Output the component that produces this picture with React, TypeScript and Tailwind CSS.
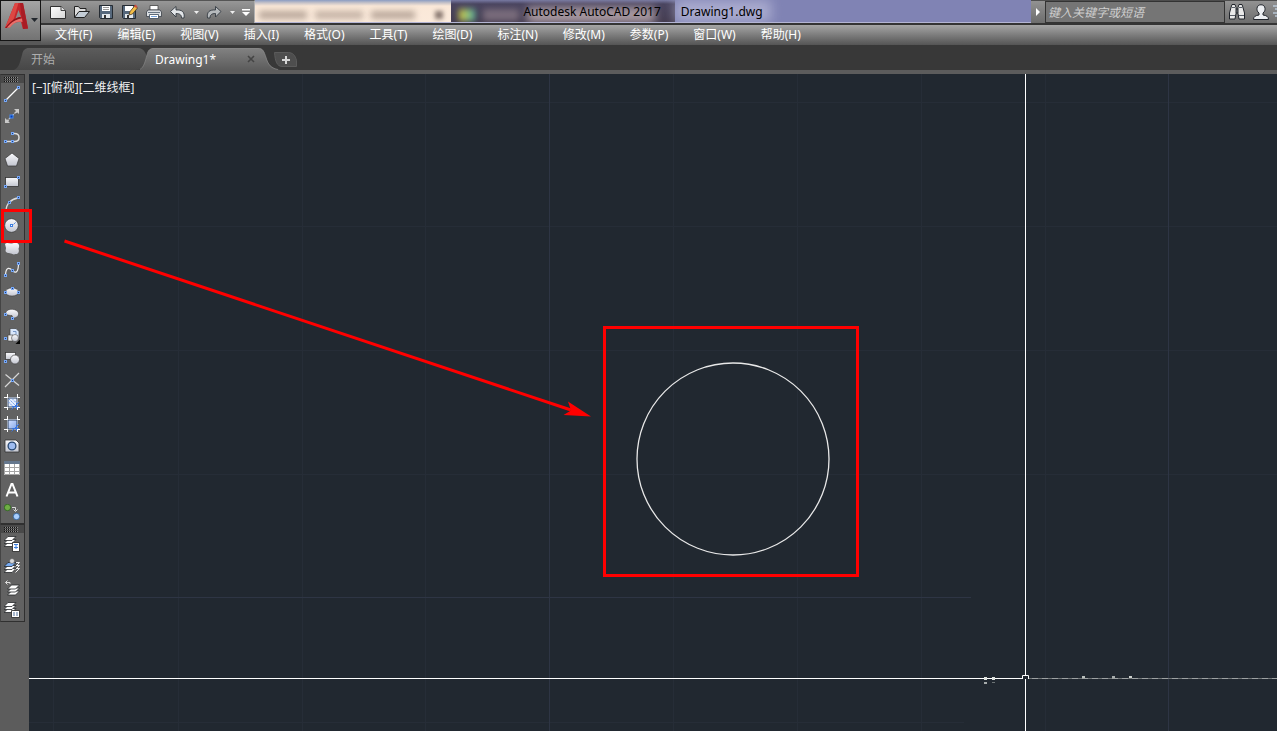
import type { ReactNode } from "react";

const uiFont = "font-['Noto_Sans','Noto_Sans_CJK_SC',sans-serif]";

/* Small hollow blue grip shown on drawing-tool icons, snapped to whole pixels */
function Grip({ x, y }: { x: number; y: number }) {
  const left = Math.min(Math.floor(x) - 1, 13);
  const top = Math.max(Math.floor(y) - 1, 0);
  return <rect x={left + 0.5} y={top + 0.5} width="2" height="2" fill="#1d3f7c" stroke="#78a8f5" strokeWidth="1" />;
}

const pale = "url(#pale)";

function Sheets({ x = 0, y = 0, top = "#fff" }: { x?: number; y?: number; top?: string }) {
  return (
    <g transform={`translate(${x} ${y})`} stroke="#26282b" strokeWidth=".8">
      <path d="M0 11.500 4 7.500h8L8 11.500z" fill="#fff" />
      <path d="M0 8.500 4 4.500h8L8 8.500z" fill="#fff" />
      <path d="M0 5.500 4 1.500h8L8 5.500z" fill={top} />
    </g>
  );
}

type Tool = { name: string; icon: ReactNode; marked?: boolean };

const drawTools: Tool[] = [
  { name: "直线", icon: <><path d="M1.500 14.500 14 2" stroke="#fff" strokeWidth="1.200" /><Grip x={1.5} y={14} /><Grip x={14.5} y={1.5} /></> },
  { name: "构造线", icon: <><path d="M2 14 14 2" stroke="#ccc" strokeWidth="1.200" strokeDasharray="3 1" /><path d="M10 1h5v5l-1.500-1.500L12 5l-.5-.5.5-1.500zM1 10v5h5l-1.500-1.500L5 12l-.5-.5-1.500.5z" fill="#c9c9c9" /><rect x="6" y="7" width="3" height="3" fill="#0b3fae" stroke="#3f86f5" /></> },
  { name: "多段线", icon: <><path d="M2 11.500h8.500c6 0 6-8 0-8H8" stroke="#dcdcdc" strokeWidth="1.500" fill="none" /><Grip x={1.5} y={11.5} /><Grip x={8.5} y={11.5} /><Grip x={8.5} y={3.5} /></> },
  { name: "多边形", icon: <path d="M8 1 15 6.500 12.500 14h-9L1 6.500z" fill={pale} stroke="#333" strokeWidth=".7" /> },
  { name: "矩形", icon: <><rect x="1.500" y="3.500" width="13" height="9" fill={pale} stroke="#333" strokeWidth=".8" /><Grip x={1.5} y={12.5} /><Grip x={14.5} y={3.5} /></> },
  { name: "圆弧", icon: <><path d="M2 15C2 8 7 3 14 2" stroke="#dcdcdc" strokeWidth="1.300" fill="none" /><Grip x={5.5} y={6} /><Grip x={14.5} y={1.5} /></> },
  { name: "圆", marked: true, icon: <><circle cx="7.500" cy="7.500" r="6.800" fill={pale} stroke="#333" strokeWidth=".6" /><path d="m8 8 4-4" stroke="#3f7fe0" strokeDasharray="2 1" /><rect x="6.500" y="6.500" width="2" height="2" fill="#fff" stroke="#3f7fe0" /></> },
  { name: "修订云线", icon: <path d="M1 4c2-2 4 0 7-.5C12 2 14 3 15 5c.5 2-.5 3-.5 4 1 2 0 5.500-3 5-2 1-3 0-4.500-.5-2-.5-3 0-5-1.500-1-1 0-3 0-4z" fill={pale} /> },
  { name: "样条曲线", icon: <><path d="M1.500 13C2 4 6 6 8.500 8.500S14 12 14.500 2.500" stroke="#eee" strokeWidth="1.200" fill="none" /><Grip x={1.5} y={13.5} /><Grip x={8.5} y={8.5} /><Grip x={14.5} y={1.5} /></> },
  { name: "椭圆", icon: <><ellipse cx="8" cy="8" rx="6.500" ry="4" fill={pale} stroke="#333" strokeWidth=".5" /><Grip x={1.5} y={8} /><Grip x={8.5} y={4} /><Grip x={14.5} y={8} /></> },
  { name: "椭圆弧", icon: <><path d="M2 6C4 2 13 2.500 14.500 7c.5 3-2 5-5.500 5L8 9.500C4 9.500 1 8.500 2 6z" fill={pale} stroke="#333" strokeWidth=".5" /><Grip x={1.5} y={8} /><Grip x={8.5} y={12} /></> },
  { name: "插入块", icon: <><path d="M6 .5h6l3 3V11H6z" fill="#d9e7fb" stroke="#444" strokeWidth=".7" /><path d="M9 3.500h3v3" fill="none" stroke="#7797c5" /><path d="M4 7h5v6H4z" fill="#eee" stroke="#444" strokeWidth=".6" /><circle cx="11" cy="10" r="3.500" fill={pale} stroke="#444" strokeWidth=".6" /><Grip x={1.5} y={10.5} /><path d="M16 11.500V16h-4.500z" fill="#050505" /></> },
  { name: "创建块", icon: <><rect x="1.500" y="2.500" width="10" height="7" fill={pale} stroke="#333" strokeWidth=".7" /><circle cx="11" cy="9.500" r="4.500" fill={pale} stroke="#444" strokeWidth=".7" /><Grip x={1.5} y={11} /></> },
  { name: "点", icon: <><path d="M1 15 15 1M1.500 2.500 15 13.500" stroke="#d6d6d6" strokeWidth="1.200" /><Grip x={8.5} y={8.5} /></> },
  { name: "图案填充", icon: <><path d="M3.500 0v16M13.500 0v16M0 3.500h16M0 13.500h16" stroke="#fff" /><path d="M4 4h9v9H4z" fill="#e4edfd" stroke="#2c415f" /><path d="m5 5 7 7M8 4.500l4.500 4.500M4.500 8l4.500 4.500" stroke="#6e9ae8" strokeDasharray="2 1" /><path d="m7.500 15.500 7.500-7.500M8 12.500h7M12.500 9v6" stroke="#3975df" /></> },
  { name: "渐变色", icon: <><path d="M3.500 0v16M13.500 0v16M0 3.500h16M0 13.500h16" stroke="#fff" /><path d="M4 4h9v9H4z" fill="url(#blue)" stroke="#2c415f" /><path d="m7.500 15.500 7.500-7.500M8 12.500h7M12.500 9v6" stroke="#3975df" /></> },
  { name: "面域", icon: <><path d="M1 2h11l3 3v9H1z" fill={pale} stroke="#333" strokeWidth=".8" /><circle cx="8" cy="8" r="3.900" fill="#9ebcf0" stroke="#26466f" strokeWidth="1.300" /></> },
  { name: "表格", icon: <><path d="M0 1h16v14H0z" fill="#fff" /><path d="M0 1h16v3H0z" fill="#66788e" /><path d="M.5 4v10.500h15V4M.5 7.500h15M.5 11.500h15M5.500 4v11M10.500 4v11" fill="none" stroke="#a5a5a5" /></> },
  { name: "多行文字", icon: <path d="M2.500 14.500 7.500 2h1l5 12.500M4.500 10.500h7" fill="none" stroke="#fff" strokeWidth="2" /> },
  { name: "添加选定对象", icon: <><circle cx="3.500" cy="3.500" r="3.200" fill="#6fae45" stroke="#28611b" strokeWidth=".8" /><circle cx="12.500" cy="12.500" r="3.200" fill="#a9ceff" stroke="#265896" strokeWidth=".8" /><path d="M8 3.500h3.500v3M9.500 5.500l2 2 2-2" fill="none" stroke="#ddd" /></> },
];

const orderTools: Tool[] = [
  { name: "前置", icon: <><Sheets y={-1} /><path d="M8.500 6.500h7v9h-7z" fill="#fff" stroke="#222" strokeWidth=".8" /><path d="M10 8.500h4M12 9v4M10 11.500h4" stroke="#3d7edc" /></> },
  { name: "后置", icon: <><Sheets x={0} y={3} top="#76aaf0" /><path d="m12 4.500 3.500 0-4 4M12 7.500h3.500l-4 4M12 10.500h3.500l-4 4" fill="none" stroke="#f1f1f1" /><circle cx="8" cy="3" r="2.500" fill="#d8d8d8" stroke="#555" strokeWidth=".6" /></> },
  { name: "置于对象之上", icon: <><Sheets x={3.5} y={3.5} /><path d="M6 4V2.500H1.500M3.500.5l-2 2 2 2" fill="none" stroke="#ddd" /></> },
  { name: "文字前置", icon: <><Sheets y={-1} /><path d="M7.500 8.500h8v7h-8z" fill="#fff" stroke="#222" strokeWidth=".8" /><path d="M9 11h2m1 0h2M9 13h2m1 0h2" stroke="#51719d" /></> },
];

function Toolbar({ label, tools }: { label: string; tools: Tool[] }) {
  return (
    <div role="toolbar" aria-label={label} className="flex flex-col border border-[#303030] border-l-[#444] bg-[#626262]">
      <div className="flex h-2 items-center bg-[#494949] pl-[3px]">
        <svg width="14" height="5" viewBox="0 0 14 5" aria-hidden="true">
          <path d="M0 .5h14M0 2.500h14M0 4.500h14" stroke="#111" strokeDasharray="1 1" />
          <path d="M1 .5h14M1 2.500h14M1 4.500h14" stroke="#8a8a8a" strokeDasharray="1 1" />
        </svg>
      </div>
      {tools.map((t) => (
        <button key={t.name} aria-label={t.name} className="relative flex h-[22px] w-full items-center pl-[3px]">
          <svg className="shrink-0" width="16" height="16" viewBox="0 0 16 16" fill="none" aria-hidden="true">{t.icon}</svg>
          {t.marked && <span className="absolute -top-[6px] left-0 z-10 h-[34px] w-[31px] border-[3px] border-[#f00]" />}
        </button>
      ))}
    </div>
  );
}

const quick: { name: string; icon: ReactNode }[] = [
  { name: "新建", icon: <><path d="M.5 2.500h10.500l4.500 4V14.500H.5z" fill="url(#paper)" stroke="#303030" /><path d="M11 2.500v4h4.500" fill="#ddd" stroke="#444" /></> },
  { name: "打开", icon: <><path d="M.5 13.500V2.500h4l1.500 2h6v3" fill="#ddd" stroke="#222" /><path d="M.5 13.500 5 7.500h10.500l-5 6z" fill="#c4cdd6" stroke="#222" /></> },
  { name: "保存", icon: <><path d="M1.500 1.500h13v13h-12l-1-1z" fill="#56687c" stroke="#252b32" /><path d="M4 2h8v5H4z" fill="#fff" /><path d="M5 3.500h6M5 5.500h6" stroke="#999" /><path d="M4 10h8v4H4z" fill="#e3e8ec" /><path d="M6 11h2v3H6z" fill="#333" /></> },
  { name: "另存为", icon: <><path d="M.5 1.500h13v13h-12l-1-1z" fill="#56687c" stroke="#252b32" /><path d="M3 2h8v5H3z" fill="#fff" /><path d="M3 10h8v4H3z" fill="#e3e8ec" /><path d="M5 11h2v3H5z" fill="#333" /><path d="m7 11 1-3.500L13 1.500 15.500 4 10.500 10z" fill="#f3bd47" stroke="#4b3b22" strokeWidth=".8" /><path d="m12 2 1.500-1.500 2 2L14 4z" fill="#cc4b3f" /></> },
  { name: "打印", icon: <><path d="M4 1.500h8V6H4z" fill="#fff" stroke="#444" strokeWidth=".8" /><path d="M2 6h12l1.500 2v4.500H.5V8z" fill="#dce0e4" stroke="#3a3f46" strokeWidth=".8" /><path d="M2 8.500h12" stroke="#697684" /><path d="M3.500 10.500h9v4h-9z" fill="#fff" stroke="#384758" strokeWidth=".8" /><path d="M5 12.500h6" stroke="#74a1da" /></> },
  { name: "放弃", icon: <path d="M.5 7.500 6 2.500v3.500C12 5.500 15 8 14 14h-2.500c0-3-1.500-4.500-5.500-4.500v3.500z" fill="#e2e5e8" stroke="#333a42" strokeWidth=".9" /> },
];

function Caret({ label }: { label: string }) {
  return (
    <button aria-label={label} className="flex h-6 w-3 shrink-0 items-center justify-center">
      <svg width="5" height="3" viewBox="0 0 5 3"><path d="M0 0h5L2.500 3z" fill="#eee" /></svg>
    </button>
  );
}

const menus = ["文件(F)", "编辑(E)", "视图(V)", "插入(I)", "格式(O)", "工具(T)", "绘图(D)", "标注(N)", "修改(M)", "参数(P)", "窗口(W)", "帮助(H)"];

/* Soft picture of the windows behind the translucent title bar */
function Backdrop() {
  return (
    <div aria-hidden="true" className="absolute inset-0 flex overflow-hidden border-b border-[#b4b5d4] bg-[#8083b4]">
      <div className="flex w-[196px] shrink-0 items-center gap-2 bg-[linear-gradient(#8a9cc2_0,#c9c4c8_3px,#fae8d8_6px,#fbeadb_100%)] pt-2 pl-1">
        <div className="h-2 w-12 bg-[#8f7d72] opacity-60 blur-[3px]" />
        <div className="h-2 w-12 bg-[#8f7d72] opacity-50 blur-[3px]" />
        <div className="h-2 w-11 bg-[#8f7d72] opacity-60 blur-[3px]" />
        <div className="ml-3 size-2 bg-[#5b4b46] opacity-70 blur-[2px]" />
      </div>
      <div className="flex w-[224px] shrink-0 items-center gap-2 bg-[linear-gradient(#7779a2_0,#49445f_4px,#443c50_100%)] pt-2 pl-2">
        <div className="h-3 w-4 bg-[linear-gradient(90deg,#d9ca3e,#57b4a5)] blur-[3px]" />
        <div className="h-3 w-9 bg-[#9b8994] opacity-60 blur-[3px]" />
        <div className="h-4 w-32 bg-[#c3b1b5] opacity-80 blur-[5px]" />
      </div>
      <div className="h-full w-24 bg-[#c5c5e0] opacity-60 blur-[6px]" />
    </div>
  );
}

function Header() {
  return (
    <header className="flex h-[45px] bg-[#585858]">
      <div className="w-[41px] shrink-0">
        <button aria-label="应用程序菜单" className="flex h-[41px] w-full items-center border border-[#151515] bg-linear-to-b from-[#a5a5a5] to-[#737373]">
          <svg width="39" height="39" viewBox="0 0 39 39" aria-hidden="true">
            <path d="M14 2h8l5 25.500-5 .5-2-7c-5-.5-8 1-11 5l-5 1z" fill="#c4262c" />
            <path d="M14 2h3.500L13 17l-4 9-5 1z" fill="#dd4743" />
            <path d="M22 2h-3l1.500 14 1.500 12 5-.5z" fill="#a91c24" />
            <path d="m17.500 9-3 8.500 4-1.500h1.500z" fill="#8c8a8a" />
            <path d="M4 27c4-5 9-10 15-11l1.500 1.500c-6 1-10 4.500-15 9.500z" fill="#8d1119" />
            <path d="M6 26.500c4-5 9-8.500 15-9l.5 3.500c-6-1-9 1-12.500 5.500z" fill="#e8706a" />
            <path d="M30 17h7l-3.500 4z" fill="#22272d" />
          </svg>
        </button>
      </div>
      <div className="flex min-w-0 flex-1 flex-col">
        <div className="flex h-[25px] border-b-2 border-[#343434]">
          <div className="flex w-[214px] shrink-0 items-center border-t border-r border-[#b0b0b0] border-t-[#555] bg-linear-to-b from-[#979797] to-[#6d6d6d] pl-[5px]">
            {quick.map((q) => (
              <button key={q.name} aria-label={q.name} className="flex h-6 w-6 shrink-0 items-center justify-center">
                <svg width="16" height="16" viewBox="0 0 16 16" fill="none">{q.icon}</svg>
              </button>
            ))}
            <Caret label="放弃列表" />
            <button aria-label="重做" className="flex h-6 w-6 shrink-0 items-center justify-center">
              <svg width="16" height="16" viewBox="0 0 16 16">
                <path d="M15 7.500 9.500 2.500v3.500C3.500 5.500.5 8 1.500 14H4c0-3 1.500-4.500 5.500-4.500v3.500z" fill="#b6babd" stroke="#333a42" strokeWidth=".9" />
              </svg>
            </button>
            <Caret label="重做列表" />
            <button aria-label="自定义快速访问工具栏" className="flex h-6 w-4 shrink-0 items-center justify-center">
              <svg width="8" height="7" viewBox="0 0 8 7"><path d="M0 0h8v1.500H0zM0 3h8L4 7z" fill="#fff" /></svg>
            </button>
          </div>
          <div className="relative flex min-w-0 flex-1 items-center justify-center">
            <Backdrop />
            <h1 className="relative flex gap-5 text-[12px] leading-4 whitespace-pre text-black">
              <span>Autodesk AutoCAD 2017</span>
              <span>Drawing1.dwg</span>
            </h1>
          </div>
          <div className="flex w-[246px] shrink-0 items-center overflow-hidden border-t border-[#4d4d4d] bg-linear-to-b from-[#929292] to-[#6d6d6d]">
            <button aria-label="展开搜索" className="flex h-full w-[14px] shrink-0 items-center justify-center">
              <svg width="4" height="8" viewBox="0 0 4 8"><path d="M0 0v8l4-4z" fill="#fff" /></svg>
            </button>
            <input aria-label="搜索" placeholder="键入关键字或短语" className="h-[22px] w-[180px] border border-[#333] bg-[#757575] px-[2px] text-[12px] italic outline-none placeholder:text-[#cfcfcf]" />
            <button aria-label="搜索帮助" className="flex h-full w-6 shrink-0 items-center justify-center">
              <svg width="16" height="16" viewBox="0 0 16 16">
                <path d="M7 5h2v4H7z" fill="#ccc" stroke="#20242b" />
                <path d="M3 .5h3l1 3v6l-1 5.500H.5V9L2 3.500zM13 .5h-3l-1 3v6l1 5.500h5.500V9L14 3.500z" fill="#e9e9e9" stroke="#20242b" />
                <path d="M2.500 3.500H6M10 3.500h3.500M1 11.500h5M10 11.500h5" stroke="#5a6069" />
              </svg>
            </button>
            <button aria-label="登录" className="flex h-full w-6 shrink-0 items-center justify-center">
              <svg width="16" height="16" viewBox="0 0 16 16">
                <path d="M.5 15.500c0-3 2-4 5.500-4.500V9C4 7.500 4 6 4 4.500 4-.5 12-.5 12 4.500 12 6 12 7.500 10 9v2c3.500.5 5.500 1.500 5.500 4.500z" fill="#eceef1" stroke="#20242b" />
              </svg>
            </button>
            <svg className="shrink-0" width="8" height="14" viewBox="0 0 8 14" aria-hidden="true"><path d="M0 1h8M2 4h6M0 8h8M2 11h6" stroke="#d4e9ff" /><path d="M5 5h3v2H5z" fill="#e87940" /></svg>
          </div>
        </div>
        <nav className="flex h-5 items-center gap-[25px] bg-linear-to-b from-[#a6a6a6] to-[#555] pl-[14px] text-[12px] leading-4 text-white">
          {menus.map((m) => (
            <button key={m} className="whitespace-nowrap">{m}</button>
          ))}
        </nav>
      </div>
    </header>
  );
}

function FileTabs() {
  return (
    <div role="tablist" className="flex h-[29px] items-end border-b-4 border-[#5c5c5c] bg-[#383838] text-[12px] leading-4">
      <div className="relative ml-[14px] h-[22px] w-[132px]">
        <svg className="absolute inset-0" width="134" height="22" viewBox="0 0 134 22" aria-hidden="true">
          <path d="M0 22C5 20 6 14 8 7c1-5 3-7 7-7h109c6 0 8 5 10 12 0 5-3 10-12 10z" fill="url(#tabOff)" />
        </svg>
        <button role="tab" aria-selected="false" className="relative flex h-full w-full items-center pt-px pl-[17px] text-[#aeaeae]">开始</button>
      </div>
      <div className="relative h-[22px] w-[128px]">
        <svg className="absolute top-0 -left-[6px]" width="140" height="22" viewBox="0 0 140 22" aria-hidden="true">
          <path d="M0 22C4 19 5 14 7 7c1-5 3-7 7-7h104c5 0 6 3 8 9 2 7 5 11 14 13z" fill="url(#tabOn)" />
          <path d="M0 21.500C4 19 5 14 7 7c1-5 3-6.500 7-6.500h104c5 0 6 3 8 9 2 7 5 11 12 12" fill="none" stroke="#888" strokeWidth=".7" />
        </svg>
        <button role="tab" aria-selected="true" className="relative flex h-full items-center pt-px pl-[9px] text-white">Drawing1*</button>
        <button aria-label="关闭 Drawing1" className="absolute top-[7px] left-[101px] size-2">
          <svg width="8" height="8" viewBox="0 0 8 8"><path d="m1 1 6 6M7 1 1 7" stroke="#444" strokeWidth="1.600" /></svg>
        </button>
      </div>
      <button aria-label="新图形" className="mb-[3px] h-[15px] w-[23px]">
        <svg width="23" height="15" viewBox="0 0 23 15">
          <path d="M.5.5h14c4 0 7 3 8 8v6H8C3 14.500 1 9 .5.500z" fill="#4e4e4e" stroke="#666" strokeWidth=".7" />
          <path d="M8 8h8M12 4v8" stroke="#d7d7d7" strokeWidth="2" />
        </svg>
      </button>
    </div>
  );
}

const minorX = [24, 149, 273, 396, 644, 768, 892, 1016];
const minorY = [28, 152, 276, 400];

function Drawing() {
  return (
    <svg className="absolute inset-0 h-full w-full" role="img" aria-label="图形区域">
      <g fill="#262d37">
        {minorX.map((x) => <rect key={x} x={x} y="0" width="1" height="100%" />)}
        {minorY.map((y) => <rect key={y} x="0" y={y} width="100%" height="1" />)}
        <rect x="0" y="648" width="935" height="1" />
      </g>
      <g fill="#2e3544">
        <rect x="520" y="0" width="1" height="100%" />
        <rect x="1139" y="0" width="1" height="100%" />
        <rect x="0" y="523" width="942" height="1" />
      </g>
      <circle cx="704" cy="385" r="96" fill="none" stroke="#e8e8e8" strokeWidth="1.300" />
      <g fill="#fff">
        <rect x="996" y="0" width="1" height="601" />
        <rect x="996" y="605" width="1" height="100%" />
        <rect x="0" y="604" width="993" height="1" />
      </g>
      <path d="M993.500 605v-3.500h6v3.500" fill="none" stroke="#fff" />
      <path d="M1000 604.500h248" stroke="#6f7476" />
      <path d="M1003 604.500h245" stroke="#9da1a2" strokeDasharray="6 4" />
      <g fill="#dfe3df">
        <rect x="955" y="603" width="3" height="3" /><rect x="963" y="603" width="3" height="3" />
        <rect x="955" y="608" width="3" height="2" opacity=".7" /><rect x="963" y="608" width="3" height="1" opacity=".4" />
        <rect x="1053" y="602" width="3" height="2" opacity=".8" /><rect x="1083" y="602" width="3" height="2" opacity=".7" /><rect x="1100" y="602" width="3" height="2" opacity=".9" />
      </g>
      <rect x="575.500" y="253.500" width="253" height="248" fill="none" stroke="#f00" strokeWidth="3" />
      <path d="M35.500 167 542 336" stroke="#f00" strokeWidth="3" />
      <path d="m562 342.500-27.500-1.500 7.500-4.500-3-9z" fill="#f00" />
    </svg>
  );
}

export default function App() {
  return (
    <div className={`flex min-h-screen flex-col overflow-hidden bg-[#5c5c5c] ${uiFont}`}>
      <svg width="0" height="0" className="absolute" aria-hidden="true">
        <defs>
          <linearGradient id="pale" x1="0" y1="0" x2="0" y2="1"><stop stopColor="#fafafc" /><stop offset="1" stopColor="#c3c6d0" /></linearGradient>
          <linearGradient id="paper" x1="0" y1="0" x2="1" y2="1"><stop stopColor="#fff" /><stop offset="1" stopColor="#d6d6d6" /></linearGradient>
          <linearGradient id="blue" x1="0" y1="0" x2="1" y2="1"><stop stopColor="#d3e1ff" /><stop offset="1" stopColor="#87a9e8" /></linearGradient>
          <linearGradient id="tabOff" x1="0" y1="0" x2="0" y2="1"><stop stopColor="#5c5c5c" /><stop offset="1" stopColor="#474747" /></linearGradient>
          <linearGradient id="tabOn" x1="0" y1="0" x2="0" y2="1"><stop stopColor="#828282" /><stop offset="1" stopColor="#5c5c5c" /></linearGradient>
        </defs>
      </svg>
      <Header />
      <FileTabs />
      <div className="flex flex-1">
        <aside className="flex w-[29px] shrink-0 flex-col pr-1">
          <Toolbar label="绘图" tools={drawTools} />
          <Toolbar label="绘图次序" tools={orderTools} />
        </aside>
        <main className="relative min-w-0 flex-1 bg-[#212830]">
          <Drawing />
          <div className="relative flex pt-[6px] pl-[3px] text-[12px] leading-4 text-[#f0f0f0]">
            <button>[−]</button>
            <button>[俯视]</button>
            <button>[二维线框]</button>
          </div>
        </main>
      </div>
    </div>
  );
}
